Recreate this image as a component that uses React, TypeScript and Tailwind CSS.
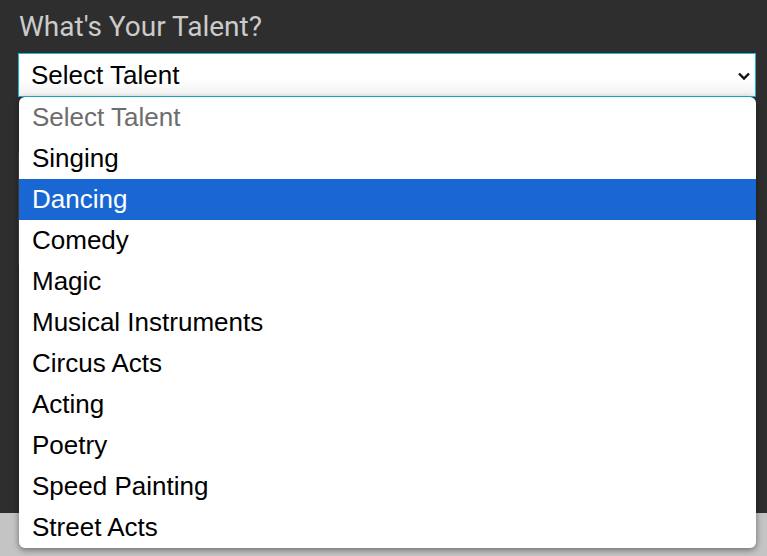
const talents = [
  'Singing',
  'Dancing',
  'Comedy',
  'Magic',
  'Musical Instruments',
  'Circus Acts',
  'Acting',
  'Poetry',
  'Speed Painting',
  'Street Acts',
];

export default function App() {
  return (
    <div className="w-[767px] h-[556px] overflow-hidden flex flex-col bg-[#c4c4c4] font-['Liberation_Sans',Arial,sans-serif]">
      <div className="h-[513px] bg-[#2e2e2e] pl-[18px] pr-[11px] pt-[10px]">
        <h2 className="text-[28px] leading-[34px] text-[#cbcbcb] font-['Roboto',sans-serif] pl-[1px]">
          What's Your Talent?
        </h2>
        <div className="relative mt-[9px]">
          <div className="h-[44px] border border-[#1eb4d4] bg-gradient-to-b from-white from-60% to-[#f1f1f1] flex items-center justify-between pl-[12px] pr-[4px]">
            <span className="text-[26px] text-black">Select Talent</span>
            <svg width="14" height="10" viewBox="0 0 14 10" className="mt-[2px]">
              <path d="M2 2.5 L7 7.5 L12 2.5" fill="none" stroke="#111" strokeWidth="2.4" />
            </svg>
          </div>
          <div className="mt-[56px] h-[112px] border-x border-[#4a4a4a]" />
          <ul className="absolute left-[1px] right-[0px] top-[44px] bg-white rounded-[6px] shadow-[0_2px_6px_rgba(0,0,0,0.45)] overflow-hidden text-[26px]">
            <li className="h-[41px] flex items-center pl-[13px] text-[#6d6d6d]">Select Talent</li>
            {talents.map((t) => (
              <li
                key={t}
                className={
                  t === 'Dancing'
                    ? 'h-[41px] flex items-center pl-[13px] bg-[#1967d2] text-white'
                    : 'h-[41px] flex items-center pl-[13px] text-black'
                }
              >
                {t}
              </li>
            ))}
          </ul>
        </div>
      </div>
    </div>
  );
}
